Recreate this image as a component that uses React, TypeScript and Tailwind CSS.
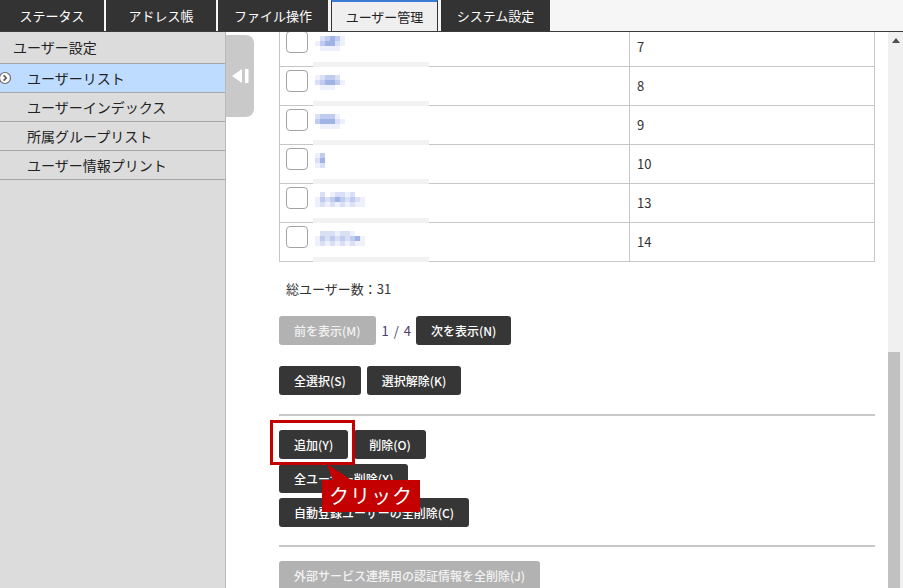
import React from "react";

const tabs = [
  { label: "ステータス", cls: "w-[104px]" },
  { label: "アドレス帳", cls: "w-[110px] ml-[2px]" },
  { label: "ファイル操作", cls: "w-[110px] ml-[2px]" },
];

const menu = ["ユーザーインデックス", "所属グループリスト", "ユーザー情報プリント"];

// pixelated (redacted) names
const levels: Record<string, string> = {
  "0": "bg-transparent",
  "1": "bg-[#eef1fb]",
  "2": "bg-[#d9e0f5]",
  "3": "bg-[#bfcbef]",
  "4": "bg-[#9fb3e6]",
};

const rows = [
  { no: "7", px: ["023431", "134421", "011110"] },
  { no: "8", px: ["123320", "234431", "011100"] },
  { no: "9", px: ["233310", "344421", "011110"] },
  { no: "10", px: ["130", "240", "120"] },
  { no: "13", px: ["0201221200", "1323432321", "1212121211"] },
  { no: "14", px: ["0222122100", "1323232341", "1212121211"] },
];

function Blur({ px }: { px: string[] }) {
  return (
    <div className="flex flex-col">
      {px.map((line, i) => (
        <div key={i} className="flex">
          {line.split("").map((c, j) => (
            <div key={j} className={`w-[5px] h-[5px] ${levels[c]}`} />
          ))}
        </div>
      ))}
    </div>
  );
}

function Btn({ children, disabled = false }: { children: React.ReactNode; disabled?: boolean }) {
  return (
    <button
      className={
        disabled
          ? "h-[29px] px-[15px] rounded-[3px] bg-[#b2b2b2] text-[#f2f2f2] text-[12px] font-medium whitespace-nowrap"
          : "h-[29px] px-[15px] rounded-[3px] bg-[#363636] text-white text-[12px] font-medium whitespace-nowrap"
      }
    >
      {children}
    </button>
  );
}

export default function App() {
  return (
    <div className="w-[903px] h-[588px] overflow-hidden bg-white flex flex-col font-['Noto_Sans_CJK_JP','Noto_Sans',sans-serif] text-[#333]">
      {/* Tabs */}
      <header className="h-[32px] shrink-0 flex bg-[#f6f6f6] border-b border-[#3a3a3a]">
        {tabs.map((t) => (
          <div key={t.label} className={`${t.cls} h-full bg-[#333] text-white text-[13px] flex items-center justify-center`}>
            {t.label}
          </div>
        ))}
        <div className="w-[107px] ml-[3px] h-full bg-[#efefef] border-t-2 border-t-[#3a7bd5] border-x border-x-[#333] text-[#222] text-[13px] flex items-center justify-center">
          ユーザー管理
        </div>
        <div className="w-[109px] ml-[3px] h-full bg-[#333] text-white text-[13px] flex items-center justify-center">
          システム設定
        </div>
      </header>

      <div className="flex flex-1 min-h-0">
        {/* Sidebar */}
        <aside className="w-[226px] shrink-0 bg-[#dcdcdc] border-r border-[#b9b9b9] text-[14px] text-[#222]">
          <div className="h-[32px] pl-[13px] flex items-center border-b border-[#a6a6a6]">ユーザー設定</div>
          <div className="relative h-[29px] pl-[27px] flex items-center bg-[#bddcff] border-b border-[#a6a6a6]">
            <svg className="absolute left-0 top-[7px]" width="13" height="14" viewBox="0 0 13 14">
              <circle cx="5" cy="7" r="5.5" fill="#fff" stroke="#6b6b6b" strokeWidth="1.2" />
              <path d="M3.6 4.4 L6.2 7 L3.6 9.6" fill="none" stroke="#555" strokeWidth="1.6" />
            </svg>
            ユーザーリスト
          </div>
          {menu.map((m) => (
            <div key={m} className="h-[29px] pl-[27px] flex items-center border-b border-[#a6a6a6]">
              {m}
            </div>
          ))}
        </aside>

        {/* collapse handle */}
        <div className="w-[28px] h-[82px] mt-[3px] shrink-0 bg-[#c9c9c9] rounded-r-[8px] flex items-center justify-center">
          <svg width="18" height="16" viewBox="0 0 18 16">
            <path d="M11 1 L1 8 L11 15 Z" fill="#fff" />
            <rect x="14" y="1" width="3.5" height="14" fill="#fff" />
          </svg>
        </div>

        {/* Main */}
        <main className="flex-1 min-w-0 overflow-hidden pl-[25px]">
          <div className="w-[596px] -mt-[4px]">
            {rows.map((r) => (
              <div key={r.no} className="relative flex h-[39px] border-x border-b border-[#c6c6c6]">
                <div className="w-[350px] border-r border-[#c6c6c6] pl-[6px] pt-[3px] flex items-start">
                  <div className="w-[22px] h-[22px] rounded-[4px] border border-[#a3a3a3] bg-white" />
                  <div className="ml-[7px] mt-[5px]">
                    <Blur px={r.px} />
                  </div>
                </div>
                <div className="flex-1 pl-[7px] flex items-center text-[13px]">{r.no}</div>
                <div className="absolute left-[33px] -bottom-[1px] w-[116px] h-[5px] bg-[#f2f2f2]" />
              </div>
            ))}
          </div>

          <div className="mt-[17px] pl-[7px] text-[13px] leading-[20px]">総ユーザー数：31</div>

          <div className="mt-[17px] flex items-center">
            <Btn disabled>前を表示(M)</Btn>
            <span className="ml-[6px] mr-[4px] text-[13px] tracking-[1px] text-[#4d3d6d]">1 / 4</span>
            <Btn>次を表示(N)</Btn>
          </div>

          <div className="mt-[21px] flex gap-[6px]">
            <Btn>全選択(S)</Btn>
            <Btn>選択解除(K)</Btn>
          </div>

          <div className="mt-[19px] w-[596px] h-[2px] bg-[#c8c8c8]" />

          <div className="relative mt-[14px] flex flex-col items-start gap-[5px]">
            <div className="flex gap-[6px]">
              <Btn>追加(Y)</Btn>
              <Btn>削除(O)</Btn>
            </div>
            <Btn>全ユーザー削除(X)</Btn>
            <Btn>自動登録ユーザーの全削除(C)</Btn>

            {/* annotation */}
            <div className="absolute -left-[9px] -top-[10px] w-[85px] h-[45px] border-[3px] border-[#c40000]" />
            <svg className="absolute left-[46px] top-[33px]" width="30" height="20" viewBox="0 0 30 20">
              <path d="M2 1 L8 18 L28 18 Z" fill="#c40000" />
            </svg>
            <div className="absolute left-[43px] top-[50px] w-[98px] h-[32px] bg-[#c40000] text-white text-[20px] flex items-center justify-center tracking-[1px]">
              クリック
            </div>
          </div>

          <div className="mt-[18px] w-[596px] h-[2px] bg-[#c8c8c8]" />

          <div className="mt-[14px]">
            <Btn disabled>外部サービス連携用の認証情報を全削除(J)</Btn>
          </div>
        </main>

        {/* scrollbar */}
        <div className="w-[15px] shrink-0 bg-[#f0f0f0] flex flex-col justify-between">
          <div className="h-[16px] flex items-center justify-center">
            <svg width="8" height="5" viewBox="0 0 8 5">
              <path d="M0 5 L4 0 L8 5 Z" fill="#505050" />
            </svg>
          </div>
          <div className="w-[12px] h-[236px] bg-[#c1c1c1]" />
        </div>
      </div>
    </div>
  );
}
